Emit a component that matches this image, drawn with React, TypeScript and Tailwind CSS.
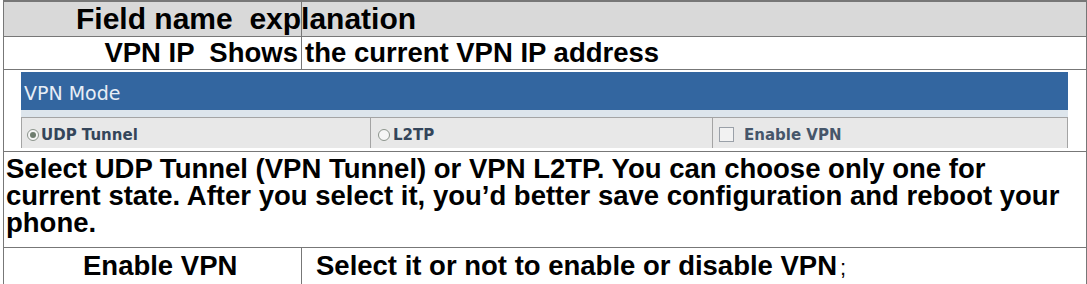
import React from 'react';

const body = { fontFamily: '"Liberation Sans", Arial, "Noto Sans CJK SC", sans-serif' };
const ui = { fontFamily: '"DejaVu Sans", Verdana, sans-serif' };

function Radio({ checked }: { checked?: boolean }) {
  return (
    <span className="flex h-[12px] w-[12px] shrink-0 items-center justify-center rounded-full border border-[#8c948c] bg-[#f6f6f6]">
      {checked && <span className="h-[6px] w-[6px] rounded-full bg-[#6f7d6f]" />}
    </span>
  );
}

export default function App() {
  return (
    <div className="h-[284px] w-[1087px] overflow-hidden bg-white font-bold text-black" style={body}>
      <div className="ml-[3px] w-[1084px] border-x border-t-2 border-[#777]">
        {/* header row */}
        <div className="flex h-[35px] border-b border-[#777] bg-[#d9d9d9]">
          <div className="w-[298px] shrink-0 border-r border-[#777] pl-[72px] text-[30px] leading-[34px] whitespace-pre">
            Field name  explanation
          </div>
          <div className="flex-1" />
        </div>

        {/* VPN IP row */}
        <div className="flex h-[33px] border-b border-[#777] text-[27.5px] leading-[32px]">
          <div className="w-[298px] shrink-0 border-r border-[#777] pr-[3px] text-right whitespace-pre">
            VPN IP  Shows
          </div>
          <div className="flex-1 pl-[3px] whitespace-nowrap">the current VPN IP address</div>
        </div>

        {/* embedded settings panel */}
        <div className="h-[82px] border-b border-[#777] pt-[2px] pl-[17px] pr-[18px] font-normal" style={ui}>
          <div className="h-[38px] bg-[#3366a0] pl-[3px] pt-[10px] text-[19px] leading-[22px] text-[#e8eef6]">
            VPN Mode
          </div>
          <div className="h-[7px] bg-[#dde5ec]" />
          <div className="flex h-[31px] border-x border-t border-[#a4a4a4] bg-[#e8e8e8] text-[15px] font-bold leading-[18px] text-[#34455a]">
            <div className="flex w-[349px] shrink-0 items-center gap-[2px] border-r border-[#a4a4a4] pl-[5px] pt-[3px]">
              <Radio checked />
              <span>UDP Tunnel</span>
            </div>
            <div className="flex w-[342px] shrink-0 items-center gap-[3px] border-r border-[#a4a4a4] pl-[7px] pt-[3px]">
              <Radio />
              <span>L2TP</span>
            </div>
            <div className="flex flex-1 items-center gap-[10px] pl-[6px] pt-[3px]">
              <span className="h-[15px] w-[15px] shrink-0 border border-[#9aa0a8] bg-[#f2f2f2]" />
              <span className="text-[#46566a]">Enable VPN</span>
            </div>
          </div>
        </div>

        {/* description paragraph */}
        <div className="border-b border-[#777] pl-[2px] pt-[3px] pb-[11px] text-[27.5px] leading-[27px]">
          Select UDP Tunnel (VPN Tunnel) or VPN L2TP. You can choose only one for current state. After you select it,
          you’d better save configuration and reboot your phone.
        </div>

        {/* Enable VPN row */}
        <div className="flex h-[40px] text-[27.5px] leading-[36px]">
          <div className="w-[298px] shrink-0 border-r border-[#777] pl-[79px] whitespace-nowrap">Enable VPN</div>
          <div className="flex-1 pl-[14px] whitespace-nowrap">
            Select it or not to enable or disable VPN<span className="ml-[3px] text-[22px] font-normal">;</span>
          </div>
        </div>
      </div>
    </div>
  );
}
